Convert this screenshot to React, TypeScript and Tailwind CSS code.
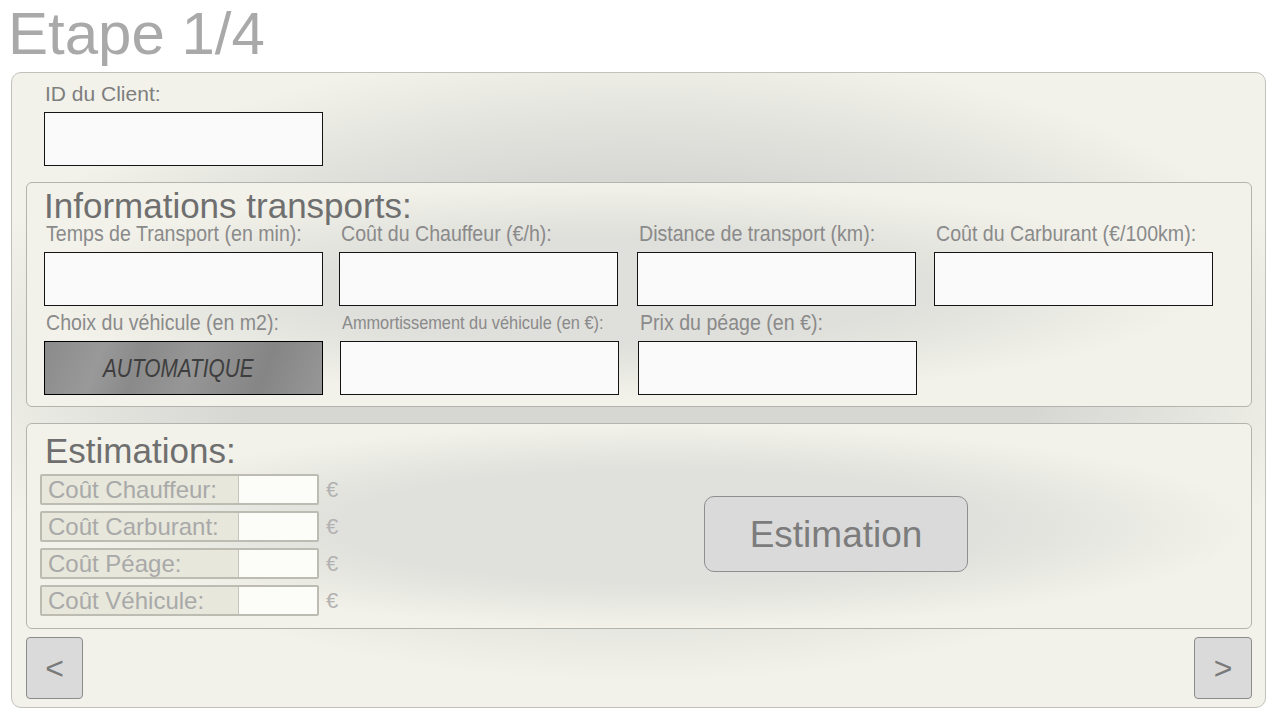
import React from "react";

const FONT = "font-['Liberation_Sans',Arial,sans-serif]";

function Field({
  label,
  labelClass,
  auto,
}: {
  label: string;
  labelClass: string;
  auto?: boolean;
}) {
  return (
    <div className="flex flex-col w-[279px]">
      <div className="h-[22px] pl-[2px] flex items-center">
        <span className={labelClass}>{label}</span>
      </div>
      {auto ? (
        <div className="mt-[7px] h-[54px] border border-black bg-[linear-gradient(110deg,#8b8b8b_0%,#999999_20%,#8a8a8a_34%,#969696_52%,#8c8c8c_68%,#858585_78%,#979797_100%)] flex items-center pl-[58px]">
          <span className="inline-block origin-left italic text-[26px] leading-[26px] text-[#3e3e3e] scale-x-[0.8] whitespace-nowrap">
            AUTOMATIQUE
          </span>
        </div>
      ) : (
        <div className="mt-[7px] h-[54px] border border-[#141414] bg-[#fafafa]" />
      )}
    </div>
  );
}

const L22 =
  "inline-block origin-left whitespace-nowrap text-[22px] leading-[22px] text-[#8a8a8a] scale-x-[0.89]";
const L19 =
  "inline-block origin-left whitespace-nowrap text-[19px] leading-[22px] text-[#8a8a8a] scale-x-[0.86]";

function EstRow({ label }: { label: string }) {
  return (
    <div className="flex items-center">
      <div className="flex h-[31px] w-[279px] border-2 border-[#bcbcb2] rounded-[2px]">
        <div className="w-[196px] bg-[#e7e7db] pl-[6px] flex items-center text-[24px] leading-[24px] text-[#a9a9a9] whitespace-nowrap">
          {label}
        </div>
        <div className="flex-1 bg-[#fcfcf8] border-l border-[#c4c4ba]" />
      </div>
      <span className="ml-[7px] text-[22px] leading-[22px] text-[#b2b2b2]">€</span>
    </div>
  );
}

export default function App() {
  return (
    <div className={`w-[1280px] h-[720px] bg-white ${FONT}`}>
      <div className="h-[64px] pt-[4px] pl-[8px] text-[60px] leading-[60px] text-[#a9a9a9] whitespace-nowrap">
        Etape 1/4
      </div>
      <div className="mt-[8px] ml-[11px] w-[1255px] h-[636px] border border-[#c2c2bd] rounded-[10px] bg-[radial-gradient(ellipse_56%_50%_at_50%_46%,#d6d6d3_58%,#f2f2ea_100%)] flex flex-col">
        {/* ID client */}
        <div className="h-[109px] pt-[10px] pl-[32px] flex flex-col">
          <div className="h-[21px] pl-[1px] text-[21px] leading-[21px] text-[#7e7e7e] whitespace-nowrap">
            ID du Client:
          </div>
          <div className="mt-[8px] w-[279px] h-[54px] border border-[#141414] bg-[#fafafa]" />
        </div>

        {/* Informations transports */}
        <div className="ml-[14px] w-[1226px] h-[225px] border border-[#b4b4ae] rounded-[6px] bg-[radial-gradient(ellipse_closest-side_at_48%_48%,#dfdfdb_50%,#f2f2ea_100%)] pt-[5px] pl-[17px] flex flex-col">
          <div className="h-[35px] text-[35px] leading-[35px] text-[#6f6f6f] whitespace-nowrap">
            Informations transports:
          </div>
          <div className="flex">
            <Field label="Temps de Transport (en min):" labelClass={L22} />
            <div className="ml-[16px]">
              <Field label="Coût du Chauffeur (€/h):" labelClass={L22} />
            </div>
            <div className="ml-[19px]">
              <Field label="Distance de transport (km):" labelClass={L22} />
            </div>
            <div className="ml-[18px]">
              <Field label="Coût du Carburant (€/100km):" labelClass={L22} />
            </div>
          </div>
          <div className="flex mt-[6px]">
            <Field label="Choix du véhicule (en m2):" labelClass={L22} auto />
            <div className="ml-[17px]">
              <Field label="Ammortissement du véhicule (en €):" labelClass={L19} />
            </div>
            <div className="ml-[19px]">
              <Field label="Prix du péage (en €):" labelClass={L22} />
            </div>
          </div>
        </div>

        {/* Estimations */}
        <div className="mt-[16px] ml-[14px] w-[1226px] h-[206px] border border-[#b4b4ae] rounded-[6px] bg-[radial-gradient(ellipse_closest-side_at_52%_50%,#e0e0dc_55%,#f2f2ea_100%)] pt-[9px] flex flex-col">
          <div className="pl-[18px] h-[35px] text-[35px] leading-[35px] text-[#6f6f6f] whitespace-nowrap">
            Estimations:
          </div>
          <div className="flex mt-[6px] pl-[13px]">
            <div className="w-[300px] flex flex-col gap-[6px]">
              <EstRow label="Coût Chauffeur:" />
              <EstRow label="Coût Carburant:" />
              <EstRow label="Coût Péage:" />
              <EstRow label="Coût Véhicule:" />
            </div>
            <div className="ml-[364px] mt-[22px] w-[264px] h-[76px] rounded-[10px] border border-[#8e8e8e] bg-[#dadada] flex items-center justify-center text-[37px] leading-[37px] text-[#7c7c7c]">
              Estimation
            </div>
          </div>
        </div>

        {/* Navigation */}
        <div className="mt-[8px] pl-[14px] pr-[13px] flex justify-between">
          <div className="w-[57px] h-[62px] rounded-[4px] border border-[#8c8c8c] bg-[#dadada] flex items-center justify-center text-[32px] leading-[32px] text-[#7a7a7a]">
            &lt;
          </div>
          <div className="w-[58px] h-[62px] rounded-[4px] border border-[#8c8c8c] bg-[#dadada] flex items-center justify-center text-[32px] leading-[32px] text-[#7a7a7a]">
            &gt;
          </div>
        </div>
      </div>
    </div>
  );
}
